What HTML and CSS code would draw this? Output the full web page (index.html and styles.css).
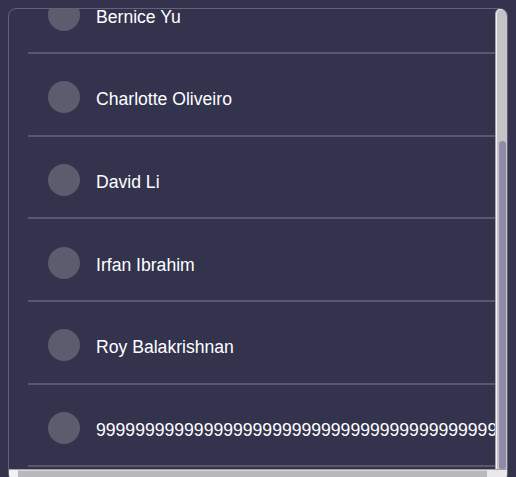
FILE: index.html
```html
<!DOCTYPE html>
<html lang="en">
<head>
<meta charset="utf-8">
<title>Contacts</title>
<link rel="stylesheet" href="styles.css">
</head>
<body>
  <div class="frame">
    <div class="viewport">
      <ul class="list">
        <li class="subheader">Contacts</li>
        <li class="item"><span class="avatar"></span><span class="name">Amelia Santos</span></li>
        <li class="item"><span class="avatar"></span><span class="name">Bernice Yu</span></li>
        <li class="item"><span class="avatar"></span><span class="name">Charlotte Oliveiro</span></li>
        <li class="item"><span class="avatar"></span><span class="name">David Li</span></li>
        <li class="item"><span class="avatar"></span><span class="name">Irfan Ibrahim</span></li>
        <li class="item"><span class="avatar"></span><span class="name">Roy Balakrishnan</span></li>
        <li class="item"><span class="avatar"></span><span class="name">99999999999999999999999999999999999999999999999999</span></li>
      </ul>
    </div>
    <div class="vbar"><div class="vthumb"></div></div>
    <div class="hbar"><span class="hcap"></span><span class="hthumb"></span><span class="hend"></span></div>
  </div>
  <script src="script.js"></script>
</body>
</html>
```

FILE: styles.css
```css
html {
  overflow: hidden;
  background: #33334e;
}

body {
  margin: 8px 8px 0;
  background: #33334e;
  font-family: "Liberation Sans", Arial, sans-serif;
  color: #ffffff;
}

.frame {
  display: grid;
  grid-template-columns: 1fr 12px;
  grid-template-rows: 460px 12px;
  border: 1px solid #62627a;
  border-radius: 8px;
  overflow: hidden;
}

.viewport {
  overflow: hidden;
}

.list {
  margin: 0;
  padding: 0 0 2px 19px;
  list-style: none;
}

.subheader {
  padding: 24px 0 24px 20px;
  font-size: 14px;
  line-height: 18px;
  color: #a9a9bd;
}

.item {
  display: flex;
  align-items: center;
  gap: 16px;
  padding: 27.3px 0 21.3px 20px;
  border-bottom: 2px solid #58586e;
  white-space: nowrap;
}

.avatar {
  flex: none;
  width: 32px;
  height: 32px;
  border-radius: 50%;
  background: #5c5c6e;
}

.name {
  font-size: 17.6px;
  line-height: 20px;
  padding-top: 4px;
}

.vbar {
  box-sizing: border-box;
  display: flex;
  flex-direction: column;
  justify-content: flex-end;
  padding: 0 1px 0 2px;
  background: #c4c4c7;
  border-left: 1px solid #a6a6ab;
  border-radius: 5px 5px 0 0;
  box-shadow: inset 1px 0 0 #f2f2f2, inset 0 1px 0 #e6e6e6;
}

.vthumb {
  flex: none;
  height: 328px;
  margin-left: 1px;
  background: #9089a8;
  border-radius: 4px 4px 3px 3px;
}

.hbar {
  grid-column: 1 / -1;
  display: flex;
  background: #c9c9cc;
  border-top: 1px solid #a3a3a8;
}

.hcap {
  flex: none;
  width: 9px;
  background: #f1f1f3;
}

.hthumb {
  flex: 1;
  background: #b9b9bd;
  box-shadow: inset 0 1px 0 #d6d6d9;
}

.hend {
  flex: none;
  width: 20px;
  background: #e9e9ec;
}
```

FILE: script.js
```js
const viewport = document.querySelector('.viewport');
const bar = document.querySelector('.vbar');
const thumb = document.querySelector('.vthumb');

viewport.scrollTop = viewport.scrollHeight;
const ratio = viewport.clientHeight / viewport.scrollHeight;
thumb.style.height = Math.round(ratio * bar.clientHeight) + 'px';
```
